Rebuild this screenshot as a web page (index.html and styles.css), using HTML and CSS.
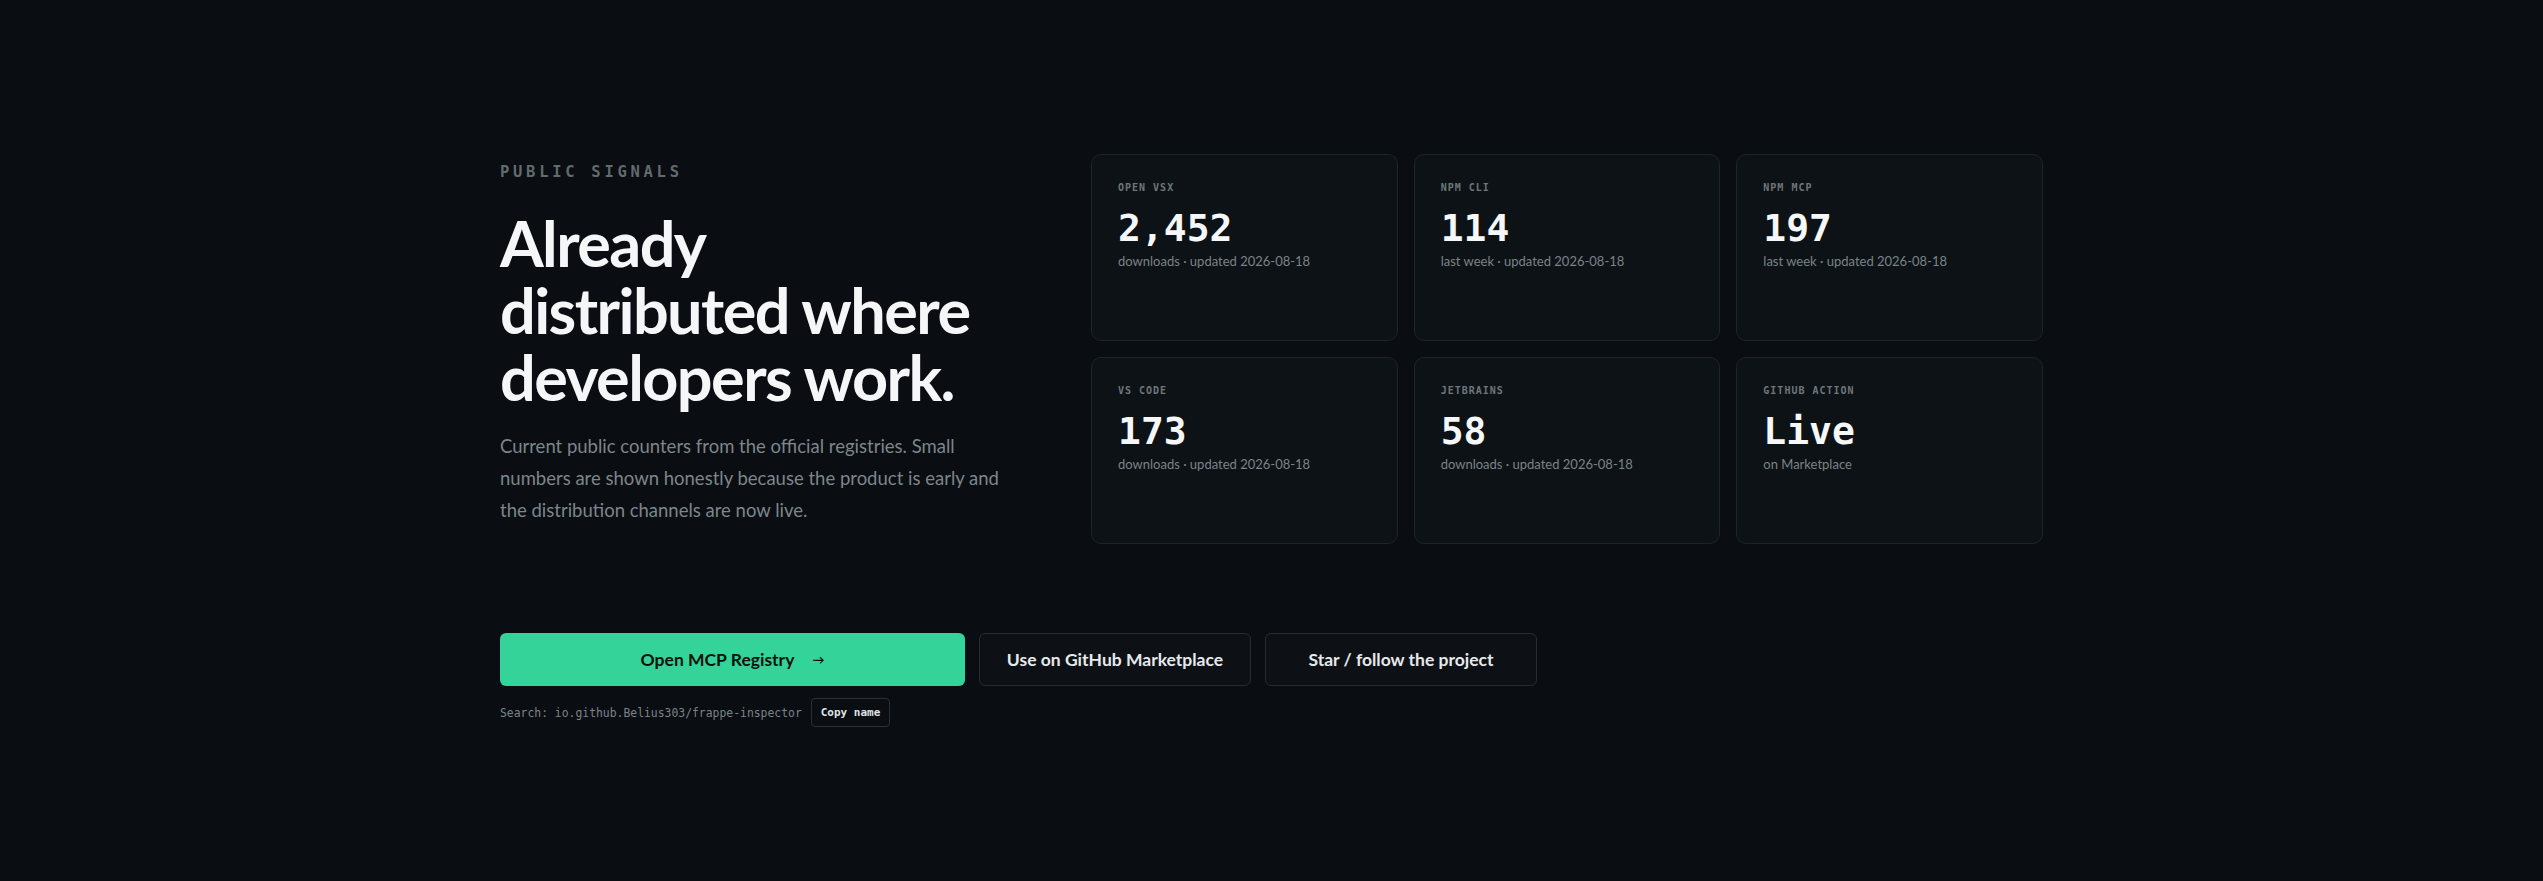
FILE: index.html
```html
<!DOCTYPE html>
<html lang="en">
    <head>
        <meta charset="utf-8">
        <title>Public signals</title>
        <link rel="stylesheet" href="styles.css">
    </head>
    <body>
        <section class="signals">
            <div class="signals-grid">
                <div class="intro">
                    <p class="eyebrow">PUBLIC SIGNALS</p>
                    <h1 class="headline">Already distributed where developers work.</h1>
                    <p class="lede">Current public counters from the official registries. Small numbers are shown honestly because the product is early and the distribution channels are now live.</p>
                </div>
                <div class="stats">
                    <div class="stat">
                        <p class="stat-label">OPEN VSX</p>
                        <p class="stat-value">2,452</p>
                        <p class="stat-note">downloads · updated 2026-08-18</p>
                    </div>
                    <div class="stat">
                        <p class="stat-label">NPM CLI</p>
                        <p class="stat-value">114</p>
                        <p class="stat-note">last week · updated 2026-08-18</p>
                    </div>
                    <div class="stat">
                        <p class="stat-label">NPM MCP</p>
                        <p class="stat-value">197</p>
                        <p class="stat-note">last week · updated 2026-08-18</p>
                    </div>
                    <div class="stat">
                        <p class="stat-label">VS CODE</p>
                        <p class="stat-value">173</p>
                        <p class="stat-note">downloads · updated 2026-08-18</p>
                    </div>
                    <div class="stat">
                        <p class="stat-label">JETBRAINS</p>
                        <p class="stat-value">58</p>
                        <p class="stat-note">downloads · updated 2026-08-18</p>
                    </div>
                    <div class="stat">
                        <p class="stat-label">GITHUB ACTION</p>
                        <p class="stat-value">Live</p>
                        <p class="stat-note">on Marketplace</p>
                    </div>
                </div>
            </div>

            <div class="actions">
                <a class="btn btn-primary" href="#">Open MCP Registry <span class="arrow">→</span></a>
                <a class="btn btn-ghost" href="#">Use on GitHub Marketplace</a>
                <a class="btn btn-ghost" href="#">Star / follow the project</a>
            </div>
            <div class="registry-name">
                <span>Search: io.github.Belius303/frappe-inspector</span>
                <button class="copy" type="button">Copy name</button>
            </div>
        </section>
    </body>
</html>
```

FILE: styles.css
```css
body{
    margin: 0;
    background: #0a0d11;
    color: #f3f5f6;
    font-family: Lato, "Noto Sans", sans-serif;
}
p{
    margin: 0;
}
.signals{
    width: 1543px;
    margin: 0 auto;
    padding-top: 154px;
}
.signals-grid{
    display: grid;
    grid-template-columns: 1fr 952px;
    gap: 60px;
    align-items: start;
}
.eyebrow{
    font-family: "DejaVu Sans Mono", monospace;
    font-weight: 700;
    font-size: 15.5px;
    line-height: 24px;
    letter-spacing: 0.24em;
    color: #606b6d;
    padding-top: 6px;
}
.headline{
    margin: 25px 0 0;
    font-size: 63px;
    line-height: 67px;
    font-weight: 700;
    letter-spacing: -0.025em;
    color: #f4f6f7;
    max-width: 490px;
}
.lede{
    margin-top: 20px;
    font-size: 18.5px;
    line-height: 32px;
    color: #7c868c;
    max-width: 510px;
}
.stats{
    display: grid;
    grid-template-columns: repeat(3, 1fr);
    gap: 16px;
}
.stat{
    height: 187px;
    box-sizing: border-box;
    padding: 26px 26px;
    background: #0d1216;
    border: 1px solid #1c2529;
    border-radius: 10px;
}
.stat-label{
    font-family: "DejaVu Sans Mono", monospace;
    font-weight: 700;
    font-size: 10px;
    line-height: 14px;
    letter-spacing: 0.1em;
    color: #6d777b;
}
.stat-value{
    margin-top: 13px;
    font-family: "DejaVu Sans Mono", monospace;
    font-weight: 700;
    font-size: 38px;
    line-height: 40px;
    color: #f5f7f8;
}
.stat-note{
    margin-top: 4px;
    font-size: 13px;
    line-height: 18px;
    color: #7a8388;
}
.actions{
    display: flex;
    gap: 14px;
    margin-top: 89px;
}
.btn{
    display: flex;
    align-items: center;
    justify-content: center;
    height: 53px;
    box-sizing: border-box;
    padding: 0 20px;
    border-radius: 6px;
    font-size: 17.5px;
    font-weight: 700;
    white-space: nowrap;
    text-decoration: none;
}
.btn-primary{
    width: 465px;
    background: #34d399;
    color: #04130d;
}
.arrow{
    margin-left: 18px;
    font-size: 12px;
}
.btn-ghost{
    width: 272px;
    background: #0d1115;
    border: 1px solid #252d33;
    color: #e6e9eb;
}
.registry-name{
    display: flex;
    align-items: center;
    gap: 9px;
    margin-top: 12px;
    font-family: "DejaVu Sans Mono", monospace;
    font-size: 11.4px;
    color: #7c8489;
}
.copy{
    height: 29px;
    padding: 0 9px;
    background: #0a0d11;
    border: 1px solid #283236;
    border-radius: 4px;
    color: #dfe3e5;
    font-family: "DejaVu Sans Mono", monospace;
    font-size: 11px;
    font-weight: 700;
}
```
